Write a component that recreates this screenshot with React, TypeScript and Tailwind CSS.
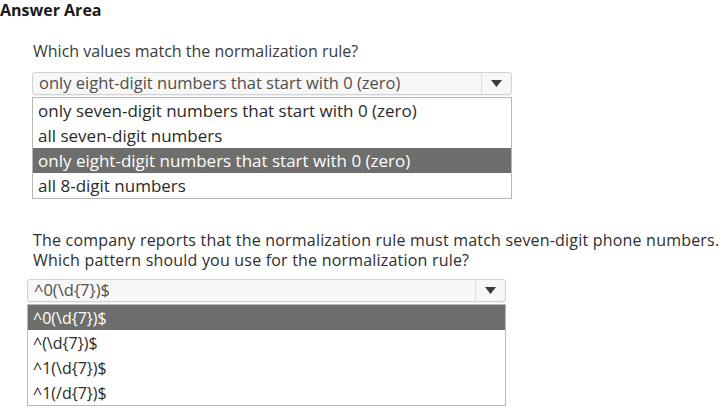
import { useState } from "react"

function Arrow() {
  return (
    <svg width="11" height="7" viewBox="0 0 11 7">
      <path d="M0 0 H11 L5.5 7 Z" fill="#3a3a3a" />
    </svg>
  )
}

function Picker({
  value,
  options,
  selected,
  className,
  listText,
}: {
  value: string
  options: string[]
  selected: number
  className: string
  listText: string
}) {
  return (
    <div className={className}>
      <div className="flex h-[23px] items-stretch rounded-[3px] border border-[#d2d2d2] bg-[#f7f7f7] shadow-[0_1px_1px_rgba(0,0,0,0.06)]">
        <div className="flex flex-1 items-center px-[6px] text-[16.5px] text-[#4f4f4f]">{value}</div>
        <div className="flex w-[30px] items-center justify-center border-l border-[#dedede]">
          <Arrow />
        </div>
      </div>
      <div className={"mt-[2px] border border-[#b8b8b8] bg-white " + listText}>
        {options.map((o, i) => (
          <div
            key={o}
            className={
              i === selected
                ? "flex h-[25px] items-center bg-[#6e6e6c] px-[5px] text-white"
                : "flex h-[25px] items-center px-[5px] text-[#2a2a2a]"
            }
          >
            {o}
          </div>
        ))}
      </div>
    </div>
  )
}

export default function App() {
  const [q1] = useState(2)
  const [q2] = useState(0)

  return (
    <div
      className="h-[410px] w-[723px] overflow-hidden bg-white leading-none"
      style={{ fontFamily: '"Open Sans", "Liberation Sans", sans-serif' }}
    >
      <div className="h-[20px] text-[16px] font-bold leading-[20px] text-[#1a1a1a]">
        Answer Area
      </div>

      <div className="mt-[21px] h-[20px] pl-[33px] text-[16px] leading-[20px] text-[#3a3a3a]">
        Which values match the normalization rule?
      </div>
      <Picker
        className="ml-[32px] mt-[11px] w-[480px]"
        value="only eight-digit numbers that start with 0 (zero)"
        options={[
          "only seven-digit numbers that start with 0 (zero)",
          "all seven-digit numbers",
          "only eight-digit numbers that start with 0 (zero)",
          "all 8-digit numbers",
        ]}
        selected={q1}
        listText="text-[17px]"
      />

      <div className="mt-[31px] whitespace-nowrap pl-[33px] text-[16px] leading-[20px] tracking-[0.2px] text-[#2e2e2e]">
        <div>The company reports that the normalization rule must match seven-digit phone numbers.</div>
        <div>Which pattern should you use for the normalization rule?</div>
      </div>
      <Picker
        className="ml-[27px] mt-[9px] w-[479px]"
        value="^0(\d{7})$"
        options={["^0(\\d{7})$", "^(\\d{7})$", "^1(\\d{7})$", "^1(/d{7})$"]}
        selected={q2}
        listText="text-[16px]"
      />
    </div>
  )
}
